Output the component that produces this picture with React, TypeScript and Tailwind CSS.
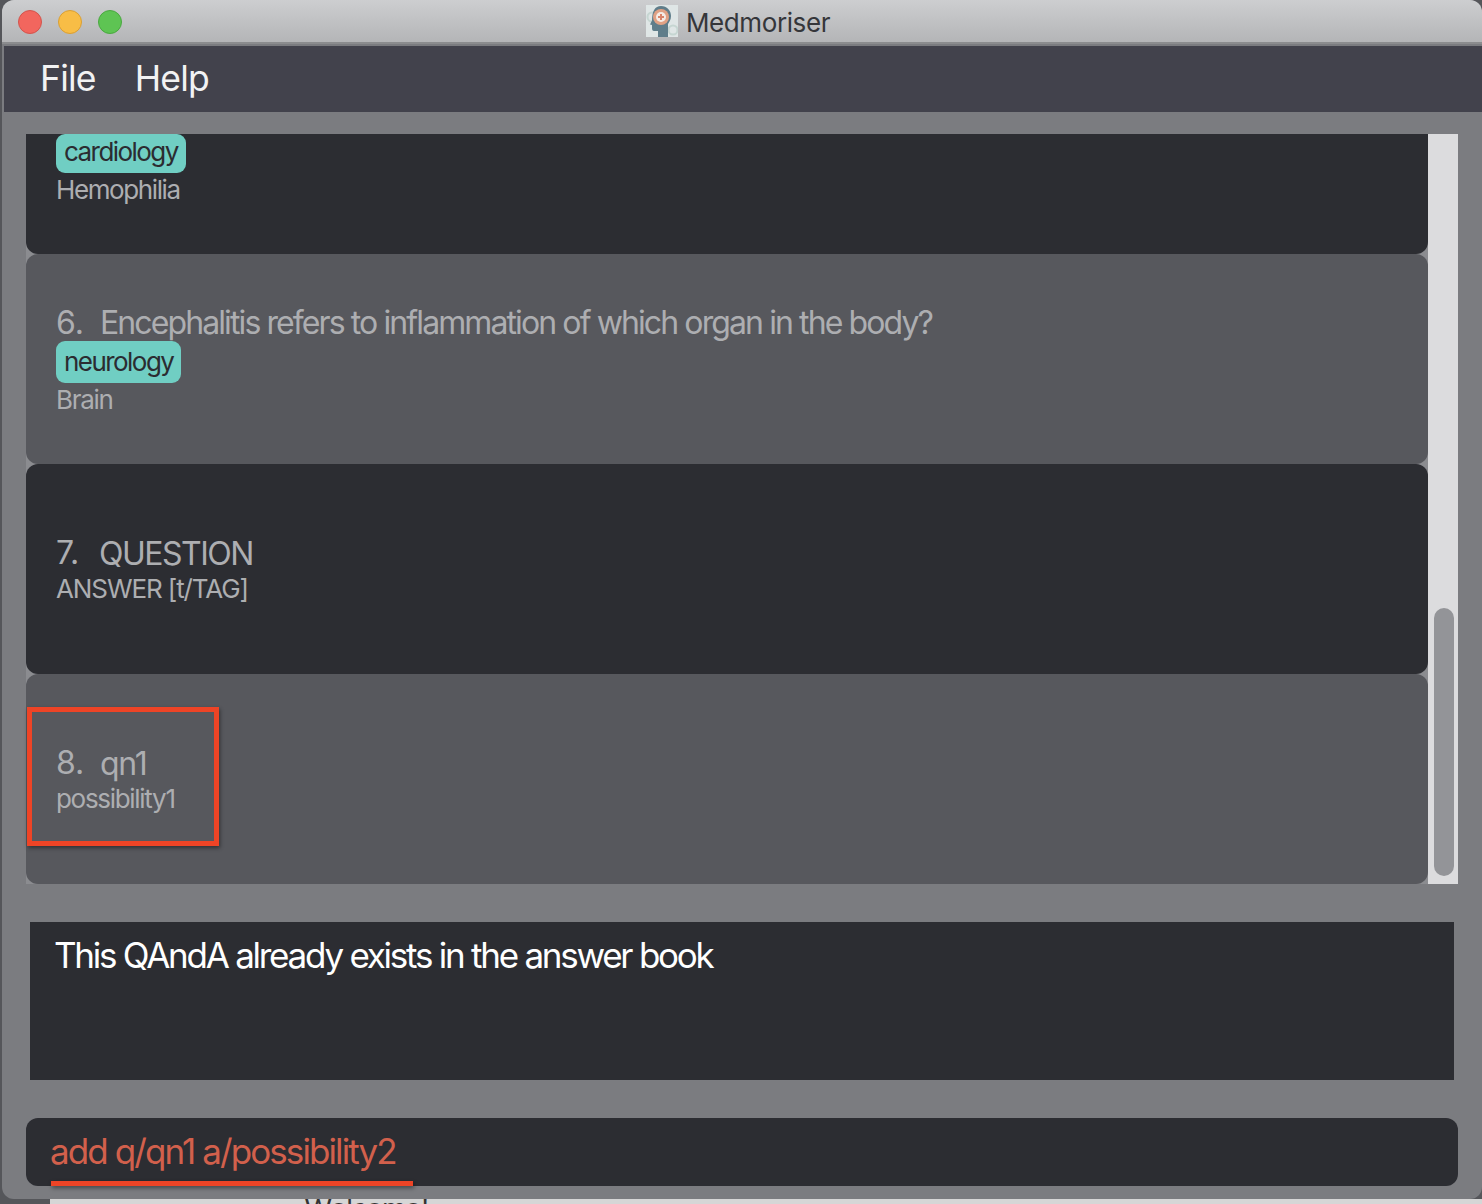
const sans = "font-['Inter','Liberation_Sans',sans-serif]";

const Logo = () => (
  <svg width="32" height="32" viewBox="0 0 32 32" className="bg-[#dfe6e6]">
    <circle cx="6" cy="12" r="4.5" fill="none" stroke="#c6d6d2" strokeWidth="2" />
    <circle cx="27" cy="25" r="4.5" fill="none" stroke="#c6d6d2" strokeWidth="2" />
    <path d="M15 1c6 0 10 4.500 10 10 0 4-2 6-3 8v13H12v-6H8c-1.500 0-2-1-2-3v-3l-2-.5 2-4C6 6 9 1 15 1z" fill="#5f7d8a" />
    <circle cx="15" cy="12" r="8" fill="#e0a184" />
    <circle cx="15" cy="12" r="5" fill="#f4ece6" />
    <path d="M14 9h2v2h2v2h-2v2h-2v-2h-2v-2h2z" fill="#d9846a" />
  </svg>
);

const Tag = ({ label, className }: { label: string; className: string }) => (
  <div className={`bg-[#70cec3] text-[#2b2c31] rounded-[9px] text-[26px] px-[8px] tracking-[-1.55px] w-fit ${className}`}>
    {label}
  </div>
);

const Card = ({
  dark,
  children,
  className = "justify-center",
}: {
  dark?: boolean;
  children: React.ReactNode;
  className?: string;
}) => (
  <div className={`rounded-[12px] pl-[30px] flex flex-col ${dark ? "bg-[#2c2d32]" : "bg-[#57585d]"} ${className}`}>
    {children}
  </div>
);

const Question = ({
  n,
  text,
  className = "tracking-[-1.3px] mt-[1px] mb-[-1px]",
}: {
  n: number;
  text: string;
  className?: string;
}) => (
  <div className="text-[#adaeb1] text-[32px] leading-[40px] flex">
    <span className="w-[44px]">{n}.</span>
    <span className={className}>{text}</span>
  </div>
);

const Answer = ({ text, className = "tracking-[-1.3px]" }: { text: string; className?: string }) => (
  <div className={`text-[#adaeb1] text-[26px] leading-[32px] ${className}`}>{text}</div>
);

export default function App() {
  return (
    <div className={`h-[1204px] w-[1482px] overflow-hidden relative bg-[#55565a] ${sans}`}>
      <div className="absolute left-[50px] right-0 top-[1199px] h-[5px] bg-[#d6d6d6]" />
      <div className="absolute left-[305px] top-[1195px] text-[28px] leading-[28px] text-[#333] font-['Liberation_Sans',sans-serif]">Welcome!</div>
      <div className="relative ml-[2px] h-[1199px] rounded-[12px] bg-[#7b7c80] overflow-hidden flex flex-col">
        {/* Title bar */}
        <div className="h-[44px] relative shrink-0 flex items-center justify-center bg-gradient-to-b from-[#cdced0] to-[#b4b5b7] border-b-2 border-[#8b8c8e]">
          <div className="absolute left-[16px] top-[10px] flex gap-[16px]">
            <div className="w-[24px] h-[24px] rounded-full bg-[#f2665e] border border-[#d2544d]" />
            <div className="w-[24px] h-[24px] rounded-full bg-[#f8bd46] border border-[#d99f34]" />
            <div className="w-[24px] h-[24px] rounded-full bg-[#5ec453] border border-[#4aa840]" />
          </div>
          <div className="flex items-center gap-[8px] mr-[8px]">
            <Logo />
            <span className="text-[26px] text-[#35363a] tracking-[-0.4px] mt-[2px]">Medmoriser</span>
          </div>
        </div>

        {/* Menu */}
        <div className="ml-[2px] h-[66px] mt-[2px] shrink-0 bg-[#42424c] flex items-center gap-[39px] pl-[36px] text-[35.5px] tracking-[-0.8px] text-[#f2f2f3]">
          <span>File</span>
          <span>Help</span>
        </div>

        {/* List */}
        <div className="mx-[24px] mt-[22px] h-[750px] shrink-0 flex overflow-hidden">
          <div className="flex-1 flex flex-col bg-[#8b8c90]">
            <Card dark className="h-[120px] rounded-t-none">
              <Tag label="cardiology" className="rounded-t-[9px] h-[39px] leading-[35px]" />
              <div className="mt-[1px]"><Answer text="Hemophilia" className="tracking-[-1.4px]" /></div>
            </Card>
            <Card className="h-[210px] pt-[49px]">
              <Question n={6} text="Encephalitis refers to inflammation of which organ in the body?" className="tracking-[-1.9px]" />
              <Tag label="neurology" className="h-[42px] leading-[42px] mt-[-2px]" />
              <div className="mt-[1px]"><Answer text="Brain" /></div>
            </Card>
            <Card dark className="h-[210px] justify-center">
              <Question n={7} text="QUESTION" className="tracking-[-1.5px] mt-[1px] mb-[-1px] ml-[-1px]" />
              <Answer text="ANSWER [t/TAG]" className="tracking-[-1.1px]" />
            </Card>
            <Card className="h-[210px] justify-center">
              <Question n={8} text="qn1" />
              <Answer text="possibility1" />
            </Card>
          </div>
          {/* Scrollbar */}
          <div className="w-[30px] bg-[#dcdcde] pt-[474px] pl-[6px]">
            <div className="w-[20px] h-[268px] rounded-full bg-[#939498]" />
          </div>
        </div>

        {/* Result */}
        <div className="mx-[28px] mt-[38px] h-[158px] shrink-0 bg-[#2c2d32] px-[24px] pt-[13px] text-[35px] leading-[40px] tracking-[-2.25px] text-white">
          This QAndA already exists in the answer book
        </div>

        {/* Command box */}
        <div className="mx-[24px] mt-[38px] h-[68px] shrink-0 rounded-[12px] bg-[#2c2d32] pl-[24px] pt-[13px] text-[35px] leading-[40px] tracking-[-1.9px] text-[#d2604c]">
          add q/qn1 a/possibility2
        </div>
      </div>

      {/* Annotations */}
      <div className="absolute left-[27px] top-[707px] w-[192px] h-[139px] border-[5px] border-[#ee4426] shadow-[1px_2px_4px_rgba(0,0,0,0.45)]" />
      <div className="absolute left-[51px] top-[1181px] w-[362px] h-[5px] bg-[#ee4426] shadow-[1px_2px_4px_rgba(0,0,0,0.45)]" />
    </div>
  );
}
